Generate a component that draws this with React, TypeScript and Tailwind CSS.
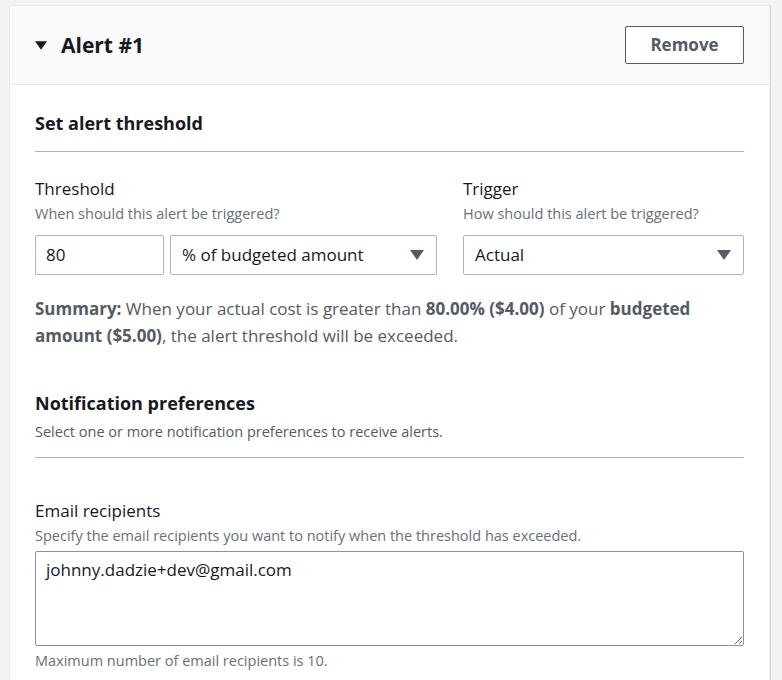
import React from "react";

const Caret = ({ className }: { className?: string }) => (
  <svg viewBox="0 0 14 10" className={className} fill="currentColor">
    <path d="M0 0h14L7 10z" />
  </svg>
);

const Label = ({ title, desc }: { title: string; desc: string }) => (
  <div>
    <div className="text-[17px] leading-[22px] text-[#16191f]">{title}</div>
    <div className="mt-[4px] text-[14.5px] leading-[20px] text-[#687078]">{desc}</div>
  </div>
);

const Select = ({ value, className }: { value: string; className?: string }) => (
  <div
    className={`flex h-10 items-center justify-between rounded-[2px] border border-[#aab7b8] bg-white pl-[11px] pr-[12px] text-[17px] text-[#16191f] ${className ?? ""}`}
  >
    <span>{value}</span>
    <Caret className="h-[10px] w-[14px] text-[#545b64]" />
  </div>
);

export default function App() {
  return (
    <div
      className="min-h-[680px] bg-[#f2f3f3] pl-[9px] pr-[12px] pt-[5px]"
      style={{ fontFamily: '"Open Sans", "Noto Sans", sans-serif' }}
    >
      <div className="border border-[#eaeded] bg-white shadow-[1px_0_0_0_#d5dbdb]">
        {/* Header */}
        <div className="flex items-center justify-between border-b border-[#eaeded] bg-[#fafafa] py-[20px] pl-[25px] pr-[25px]">
          <div className="flex items-center gap-[14px]">
            <Caret className="h-[9px] w-[12px] text-[#16191f]" />
            <h2 className="text-[21px] font-bold leading-[28px] text-[#16191f]">Alert #1</h2>
          </div>
          <button className="h-[38px] w-[119px] rounded-[2px] border border-[#545b64] bg-white text-[17px] font-bold text-[#545b64]">
            Remove
          </button>
        </div>

        {/* Body */}
        <div className="px-[25px] pt-[27px]">
          <h3 className="border-b border-[#aab7b8] pb-[17px] text-[18px] font-bold leading-[22px] text-[#16191f]">
            Set alert threshold
          </h3>

          <div className="mt-[26px] flex gap-[26px]">
            <div className="w-[402px]">
              <Label title="Threshold" desc="When should this alert be triggered?" />
              <div className="mt-[11px] flex gap-[6px]">
                <div className="flex h-10 w-[129px] items-center rounded-[2px] border border-[#aab7b8] pl-[10px] text-[17px] text-[#16191f]">
                  80
                </div>
                <Select value="% of budgeted amount" className="flex-1" />
              </div>
            </div>
            <div className="flex-1">
              <Label title="Trigger" desc="How should this alert be triggered?" />
              <Select value="Actual" className="mt-[11px]" />
            </div>
          </div>

          <p className="mt-[20px] text-[17px] leading-[27px] text-[#545b64]">
            <b className="font-bold">Summary:</b> When your actual cost is greater than{" "}
            <b className="font-bold">80.00% ($4.00)</b> of your <b className="font-bold">budgeted amount ($5.00)</b>, the
            alert threshold will be exceeded.
          </p>

          <div className="mt-[43px] border-b border-[#aab7b8] pb-[15px]">
            <h3 className="text-[18px] font-bold leading-[22px] text-[#16191f]">Notification preferences</h3>
            <p className="mt-[8px] text-[14.5px] leading-[20px] text-[#545b64]">
              Select one or more notification preferences to receive alerts.
            </p>
          </div>

          <div className="mt-[42px]">
            <Label
              title="Email recipients"
              desc="Specify the email recipients you want to notify when the threshold has exceeded."
            />
            <textarea
              readOnly
              defaultValue="johnny.dadzie+dev@gmail.com"
              className="mt-[5px] block h-[95px] w-full rounded-[2px] border border-[#879596] px-[10px] py-[6px] text-[17px] leading-[24px] text-[#16191f] outline-none"
            />
            <p className="mt-[5px] pb-[20px] text-[14.5px] leading-[20px] text-[#687078]">
              Maximum number of email recipients is 10.
            </p>
          </div>
        </div>
      </div>
    </div>
  );
}
